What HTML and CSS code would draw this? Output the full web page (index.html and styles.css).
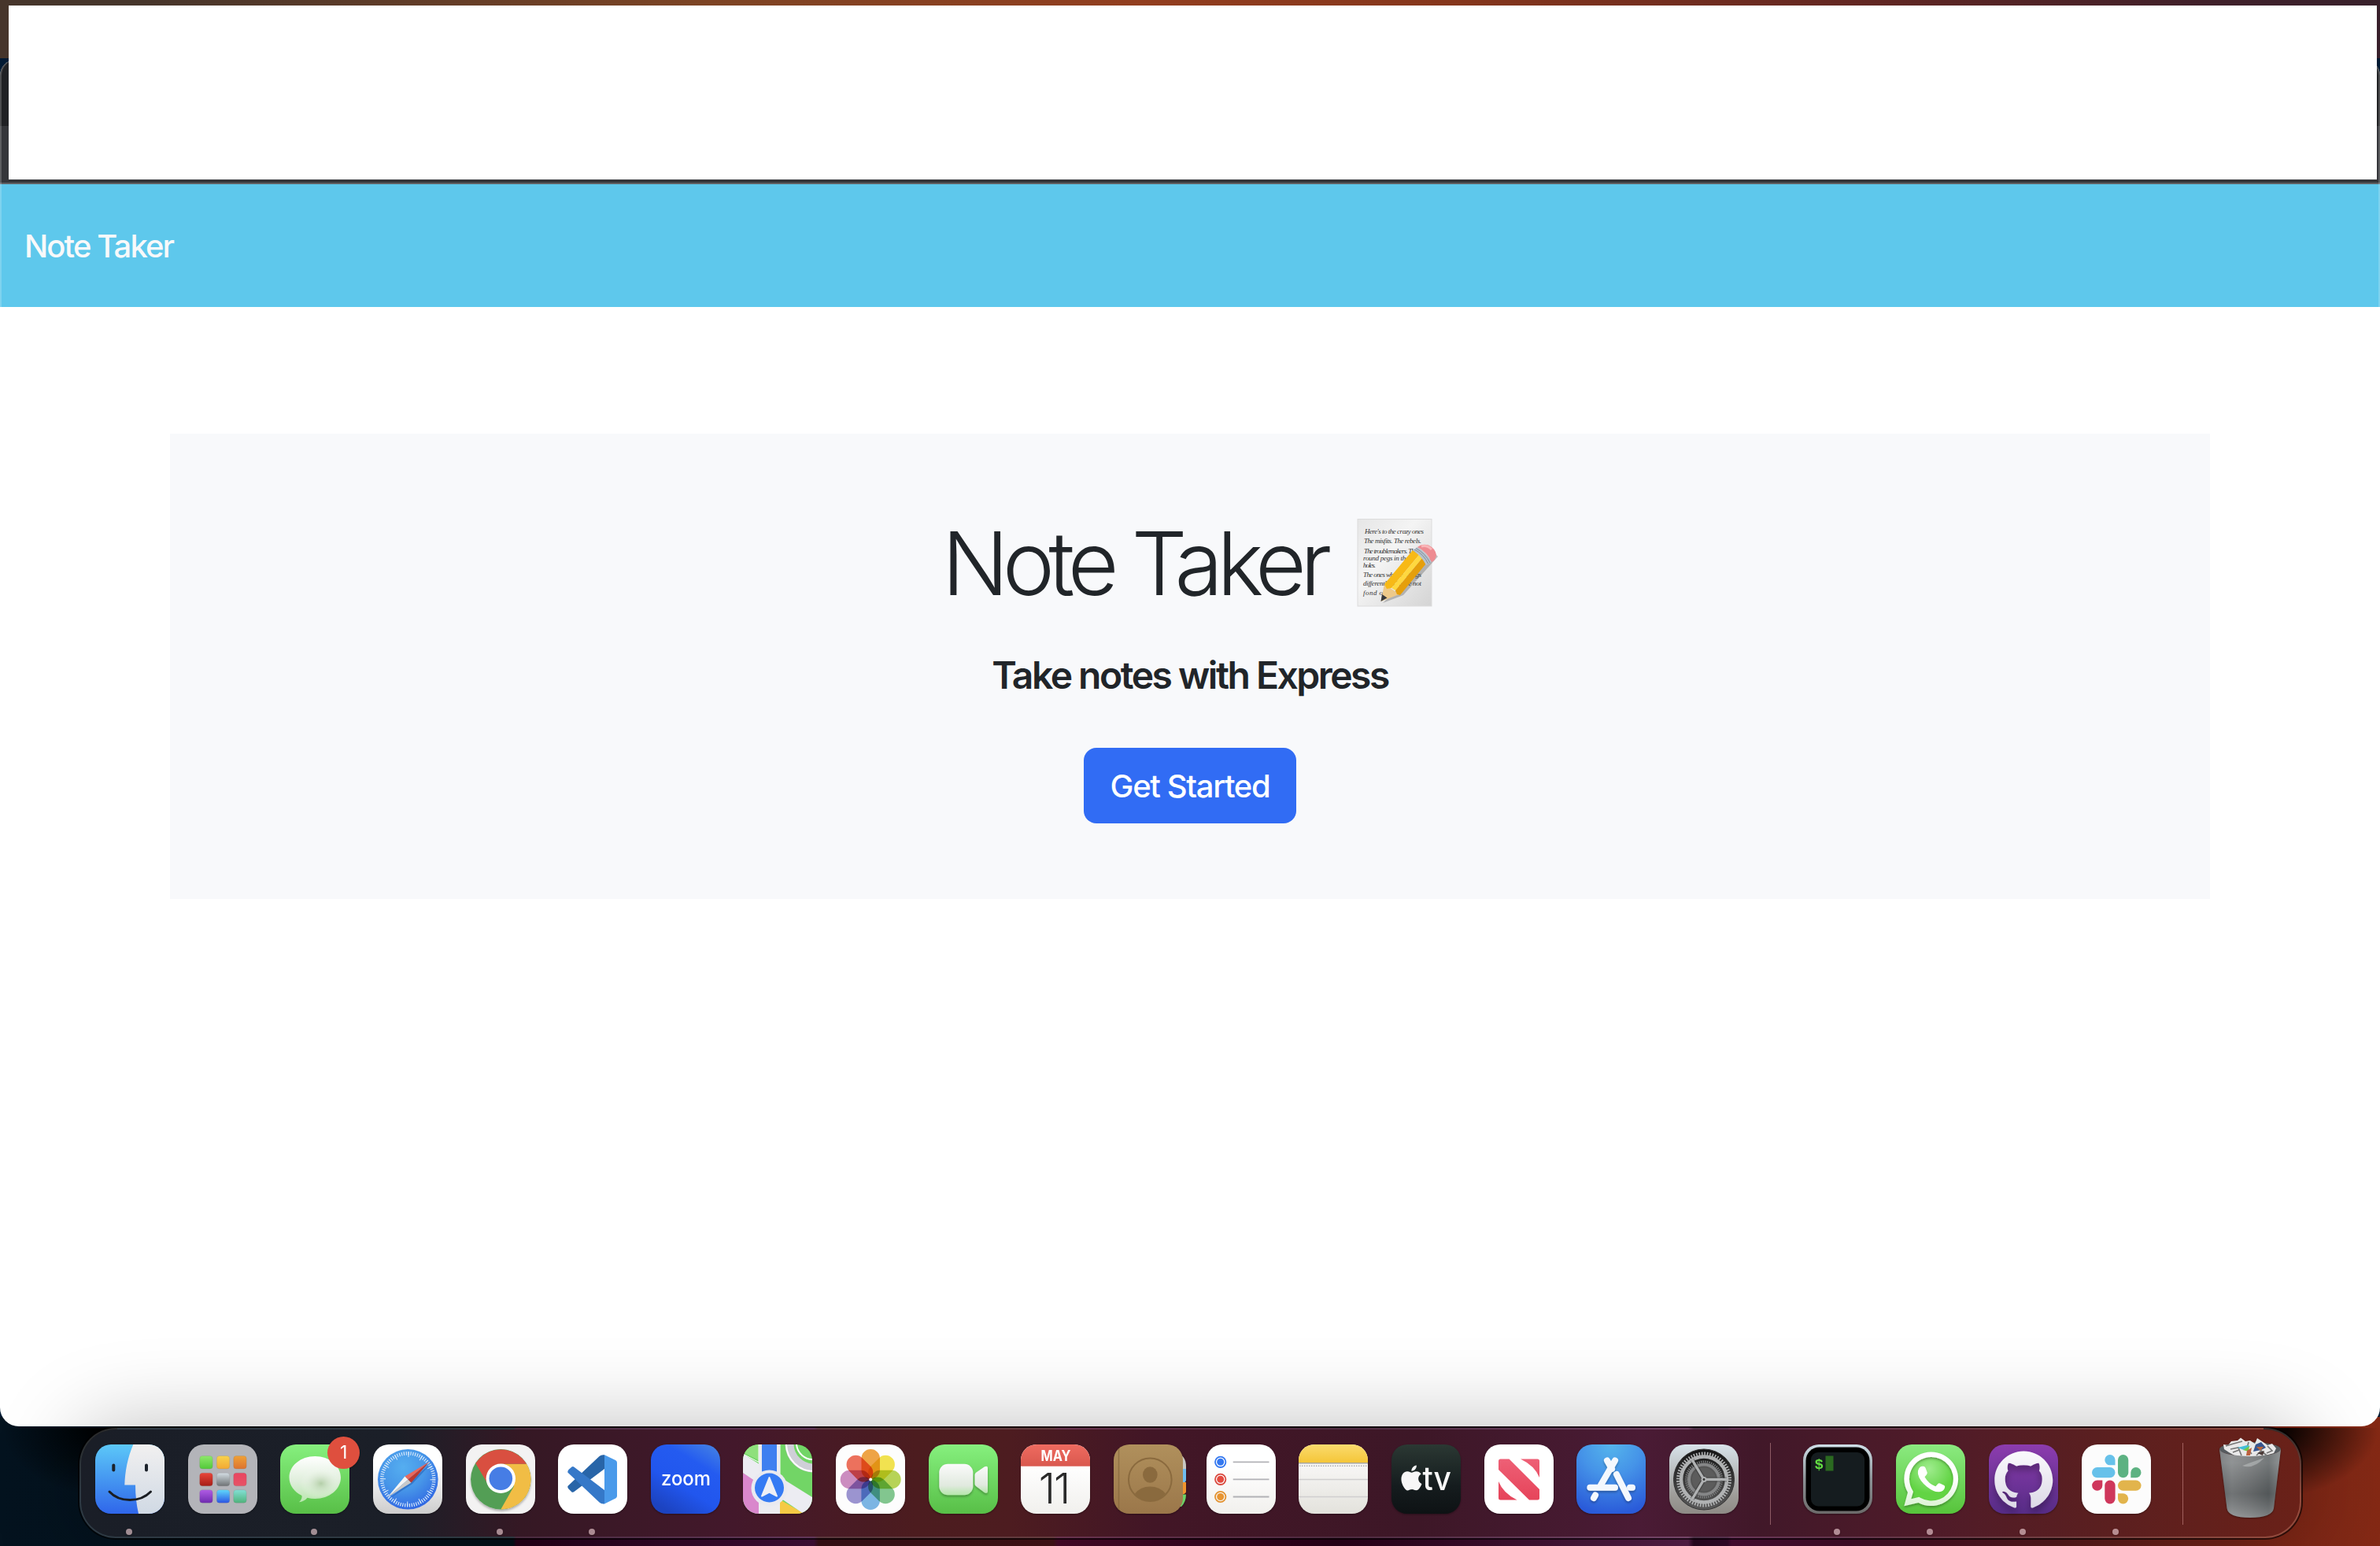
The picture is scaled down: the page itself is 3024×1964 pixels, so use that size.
FILE: index.html
```html
<!DOCTYPE html>
<html lang="en">
<head>
<meta charset="utf-8">
<title>Note Taker</title>
<link rel="stylesheet" href="styles.css">
</head>
<body>
<div class="menubar"></div>
<main class="window">
  <div class="tabs"></div>
  <div class="toolbar"></div>
  <nav class="navbar"><a class="brand">Note Taker</a></nav>
  <section class="hero">
    <h1 class="title"><span class="title-text">Note Taker</span>
      <svg class="memo" viewBox="0 0 112 112">
        <defs>
          <linearGradient id="paper" x2="1" y2="1"><stop offset="0" stop-color="#e6e6e6"/><stop offset=".4" stop-color="#f4f4f4"/><stop offset="1" stop-color="#d4d4d4"/></linearGradient>
        </defs>
        <rect x="10" y=".5" width="94" height="110.500" fill="url(#paper)" stroke="#dcdcdc"/>
        <g class="script">
          <text x="19" y="19" textLength="75">Here's to the crazy ones</text>
          <text x="18" y="31" textLength="73">The misfits. The rebels.</text>
          <text x="18" y="43.500" textLength="68">The troublemakers. The</text>
          <text x="17" y="52.500" textLength="58">round pegs in the</text>
          <text x="17" y="62" textLength="16">holes.</text>
          <text x="17" y="74" textLength="74">The ones who see things</text>
          <text x="17" y="84.500" textLength="74">differently. They're not</text>
          <text x="17" y="97" textLength="28">fond of</text>
        </g>
        <path d="M42 107 68 97 112 48 108 44Z" fill="#555" opacity=".35"/>
        <path d="M39.500 105 44 83 63 96Z" fill="#edc98a"/>
        <path d="M39.500 105 41 96 47.500 100.500Z" fill="#35383c"/>
        <path d="M44 83 80 40 88 46 53 88 47 89Z" fill="#f7b916"/>
        <path d="M53 88 88 46 92 50 58 91Z" fill="#ffd83f"/>
        <path d="M58 91 92 50 97 57 64 97 60 96Z" fill="#e59f0c"/>
        <path d="M80 40 86 36Q98 43 104 55L97 59Q91 47 80 40Z" fill="#b8c2cc"/>
        <path d="M82 39Q94 45 99.500 57M84 37.500Q96 44 102 56" fill="none" stroke="#7f8e9c" stroke-width="1"/>
        <path d="M86 36Q92 31 100 33.500 109 38 110 46 109 53 104 55 98 42 86 36Z" fill="#ee8c92"/>
        <path d="M91 35Q98 33 104 39" fill="none" stroke="#f9b6b8" stroke-width="3"/>
      </svg>
    </h1>
    <h4 class="subtitle">Take notes with Express</h4>
    <a class="btn"><span>Get Started</span></a>
  </section>
</main>
<div class="cover"></div>

<footer class="dock">
  <div class="apps">
    <div class="app running"><svg viewBox="0 0 88 88">
      <defs>
        <clipPath id="tile"><rect width="88" height="88" rx="20"/></clipPath>
        <linearGradient id="finder" x2="0" y2="1"><stop offset="0" stop-color="#5cc8f8"/><stop offset="1" stop-color="#2f66ea"/></linearGradient>
        <linearGradient id="finder2" x2="0" y2="1"><stop offset="0" stop-color="#f1f0f0"/><stop offset="1" stop-color="#d0d9e4"/></linearGradient>
      </defs>
      <g clip-path="url(#tile)"><rect width="88" height="88" fill="url(#finder)"/>
      <path d="M48.300 0C41 17 38 34 37.300 51.500H51C51 65 52.500 77 55 88H88V0Z" fill="url(#finder2)"/></g>
      <path d="M23.300 26.500V32.500M65 26.500V32.500" stroke="#1c222b" stroke-width="4" stroke-linecap="round"/>
      <path d="M18 60C31 74 57 74 70.500 60" fill="none" stroke="#1a1d22" stroke-width="3" stroke-linecap="round"/>
    </svg></div>

    <div class="app"><svg viewBox="0 0 88 88">
      <defs>
        <linearGradient id="t1" x2="0" y2="1"><stop stop-color="#8ee86c"/><stop offset="1" stop-color="#53c93a"/></linearGradient>
        <linearGradient id="t2" x2="0" y2="1"><stop stop-color="#f8d24c"/><stop offset="1" stop-color="#f2a934"/></linearGradient>
        <linearGradient id="t3" x2="0" y2="1"><stop stop-color="#efa137"/><stop offset="1" stop-color="#dd7330"/></linearGradient>
        <linearGradient id="t4" x2="0" y2="1"><stop stop-color="#e9463a"/><stop offset="1" stop-color="#a61d16"/></linearGradient>
        <linearGradient id="t5" x2="0" y2="1"><stop stop-color="#d3dde3"/><stop offset="1" stop-color="#6f7375"/></linearGradient>
        <linearGradient id="t6" x2="0" y2="1"><stop stop-color="#ea4560"/><stop offset="1" stop-color="#e65367"/></linearGradient>
        <linearGradient id="t7" x2="0" y2="1"><stop stop-color="#b05ce4"/><stop offset="1" stop-color="#6f2bb0"/></linearGradient>
        <linearGradient id="t8" x2="0" y2="1"><stop stop-color="#5fd8fb"/><stop offset="1" stop-color="#2b55e4"/></linearGradient>
        <linearGradient id="t9" x2="0" y2="1"><stop stop-color="#83dfd5"/><stop offset="1" stop-color="#4fb37c"/></linearGradient>
      </defs>
      <rect width="88" height="88" rx="20" fill="#b3b4b9"/>
      <g stroke="#777" stroke-opacity=".35" stroke-width=".6">
      <rect x="14.700" y="14.500" width="16.500" height="16.500" rx="3.500" fill="url(#t1)"/><rect x="36.300" y="14.500" width="16.500" height="16.500" rx="3.500" fill="url(#t2)"/><rect x="57.700" y="14.500" width="16.500" height="16.500" rx="3.500" fill="url(#t3)"/>
      <rect x="14.700" y="36.200" width="16.500" height="16.500" rx="3.500" fill="url(#t4)"/><rect x="36.300" y="36.200" width="16.500" height="16.500" rx="3.500" fill="url(#t5)"/><rect x="57.700" y="36.200" width="16.500" height="16.500" rx="3.500" fill="url(#t6)"/>
      <rect x="14.700" y="57.700" width="16.500" height="16.500" rx="3.500" fill="url(#t7)"/><rect x="36.300" y="57.700" width="16.500" height="16.500" rx="3.500" fill="url(#t8)"/><rect x="57.700" y="57.700" width="16.500" height="16.500" rx="3.500" fill="url(#t9)"/>
      </g>
    </svg></div>

    <div class="app running"><svg viewBox="0 0 88 88">
      <defs>
        <linearGradient id="green" x2="0" y2="1"><stop stop-color="#86f07e"/><stop offset="1" stop-color="#58bf47"/></linearGradient>
        <linearGradient id="bubble" x2="0" y2="1"><stop stop-color="#fff"/><stop offset=".55" stop-color="#dfeedb"/><stop offset="1" stop-color="#b9e6ae"/></linearGradient>
        <radialGradient id="shade" cx=".6" cy=".62" r=".45"><stop stop-color="#a9c79c" stop-opacity=".8"/><stop offset="1" stop-color="#fff" stop-opacity="0"/></radialGradient>
      </defs>
      <rect width="88" height="88" rx="20" fill="url(#green)"/>
      <path d="M44.300 15C62.500 15 77 27 77 42S62.500 69 44.300 69Q39 69 34.500 67.800C32 71 28 73 24 73.300 27 70.500 28 67.500 27.500 65 17.500 60 11.500 51.500 11.500 42 11.500 27 26 15 44.300 15Z" fill="url(#bubble)"/>
      <ellipse cx="46" cy="44" rx="29" ry="23" fill="url(#shade)"/>
    </svg><span class="badge">1</span></div>

    <div class="app"><svg viewBox="0 0 88 88">
      <defs>
        <linearGradient id="white" x2="0" y2="1"><stop offset=".3" stop-color="#fff"/><stop offset="1" stop-color="#cdcdcd"/></linearGradient>
        <radialGradient id="sky" cx=".42" cy=".3" r=".75"><stop stop-color="#55aef0"/><stop offset=".5" stop-color="#4796e8"/><stop offset="1" stop-color="#2e63e2"/></radialGradient>
      </defs>
      <rect width="88" height="88" rx="20" fill="url(#white)"/>
      <circle cx="44.300" cy="44.300" r="38.300" fill="url(#sky)"/>
      <circle cx="44.300" cy="44.300" r="33" fill="none" stroke="#d6e8fa" stroke-width="4.500" stroke-dasharray="1.200 1.680"/>
      <circle cx="44.300" cy="44.300" r="31.500" fill="none" stroke="#d6e8fa" stroke-width="6.500" stroke-dasharray="1.100 15.393"/>
      <path d="M20 69.500 50 50 74 24Z" fill="#1b4fa8" opacity=".45"/>
      <path d="M18 67.500 40.500 40.500 44.500 44.500Z" fill="#f5f5f5"/><path d="M18 67.500 44.500 44.500 48.500 48.500Z" fill="#c9c9c9"/>
      <path d="M71.500 22 40.500 40.500 44.500 44.500Z" fill="#e8695e"/><path d="M71.500 22 44.500 44.500 48.500 48.500Z" fill="#b93a31"/>
    </svg></div>

    <div class="app running"><svg viewBox="0 0 88 88">
      <defs><filter id="soft" x="-20%" y="-20%" width="140%" height="150%"><feDropShadow dx="0" dy="2" stdDeviation="1.500" flood-opacity=".3"/></filter></defs>
      <rect width="88" height="88" rx="20" fill="#f3f2f2"/>
      <g filter="url(#soft)">
      <circle cx="44.300" cy="44.300" r="38.200" fill="#529e54"/>
      <path d="M44.300 24.700H77.100A38.200 38.200 0 0 1 44.300 82.500L61 53Z" fill="#f1bd45"/>
      <path d="M12.300 24A38.200 38.200 0 0 1 77 24.700H44.300L27 49Z" fill="#d95040"/></g>
      <circle cx="44.300" cy="43.300" r="18.700" fill="#fff"/><circle cx="44.300" cy="43.300" r="14.800" fill="#467de5"/>
    </svg></div>

    <div class="app running"><svg viewBox="0 0 88 88">
      <rect width="88" height="88" rx="20" fill="#fff"/>
      <path d="M12.300 53Q12 55 13.500 56.500L17.500 60.500Q19 61.300 20.500 60L59 31V13.300Q55 12.700 52.500 15Z" fill="#2865a8"/>
      <path d="M12.300 35.500Q12 33.500 13.500 32L17.500 28.500Q19 27.500 20.500 28.700L59 58V75.500Q55 76 52.500 73.500Z" fill="#3578c8"/>
      <path d="M59 13.300 73 20Q75 21 75 23V65.500Q75 67.500 73 68.500L59 75.500Z" fill="#4a9aea"/>
    </svg></div>

    <div class="app"><svg viewBox="0 0 88 88">
      <defs><linearGradient id="zm" x1=".9" x2=".3" y2="1"><stop stop-color="#4380e4"/><stop offset=".3" stop-color="#245bf0"/><stop offset=".65" stop-color="#2156ee"/><stop offset="1" stop-color="#1c43c0"/></linearGradient></defs>
      <rect width="88" height="88" rx="20" fill="url(#zm)"/>
      <text class="zoom-word" x="13" y="51.500" textLength="63" lengthAdjust="spacingAndGlyphs">zoom</text>
    </svg></div>

    <div class="app"><svg viewBox="0 0 88 88">
      <g clip-path="url(#tile)"><rect width="88" height="88" fill="#72d566"/>
      <path d="M0 0H20V20L0 10Z" fill="#8fe07c"/>
      <path d="M0 36 20 48V88H0Z" fill="#d987cc"/>
      <path d="M47 70 78 88H47Z" fill="#f5ca45"/>
      <path d="M0 12 88 67V88H77L0 36Z" fill="#ececf2"/><path d="M0 12 20 22.500V0H47V41" fill="none" stroke="#fff" stroke-width="1"/>
      <path d="M20 0H47V88H20Z" fill="#ececf0"/>
      <path d="M24 0H43V50H24Z" fill="#3f80f0"/>
      <path d="M59 0A31 31 0 0 0 90 30" fill="none" stroke="#cfcfd8" stroke-width="11"/><path d="M55 0A35 35 0 0 0 90 34M68 0A21 21 0 0 0 90 19" fill="none" stroke="#fff" stroke-width="2"/></g>
      <circle cx="33.500" cy="55.500" r="23" fill="#e9eaf0"/><circle cx="33.500" cy="55" r="18.500" fill="#357bf4"/>
      <path d="M33.500 42 24 65.500 33.500 60.500 43 65.500Z" fill="#eef0f6" stroke="#eef0f6" stroke-width="2" stroke-linejoin="round"/>
    </svg></div>

    <div class="app"><svg viewBox="0 0 88 88">
      <rect width="88" height="88" rx="20" fill="#fdfdfd"/>
      <g class="petals">
        <rect x="32.500" y="6" width="23.500" height="38" rx="11.700" fill="#f0a03c"/>
        <rect x="32.500" y="6" width="23.500" height="38" rx="11.700" fill="#f3e346" transform="rotate(45 44.200 44.500)"/>
        <rect x="32.500" y="6" width="23.500" height="38" rx="11.700" fill="#b5d34f" transform="rotate(90 44.200 44.500)"/>
        <rect x="32.500" y="6" width="23.500" height="38" rx="11.700" fill="#7cc58a" transform="rotate(135 44.200 44.500)"/>
        <rect x="32.500" y="6" width="23.500" height="38" rx="11.700" fill="#76b3e4" transform="rotate(180 44.200 44.500)"/>
        <rect x="32.500" y="6" width="23.500" height="38" rx="11.700" fill="#978fd0" transform="rotate(225 44.200 44.500)"/>
        <rect x="32.500" y="6" width="23.500" height="38" rx="11.700" fill="#cb88bf" transform="rotate(270 44.200 44.500)"/>
        <rect x="32.500" y="6" width="23.500" height="38" rx="11.700" fill="#ee6a55" transform="rotate(315 44.200 44.500)"/>
      </g>
      <circle cx="44.200" cy="44.500" r="2" fill="#fff"/>
    </svg></div>

    <div class="app"><svg viewBox="0 0 88 88">
      <defs><linearGradient id="cam" x2="0" y2="1"><stop stop-color="#fbfbfb"/><stop offset=".7" stop-color="#e0e9de"/><stop offset="1" stop-color="#b5e6ab"/></linearGradient></defs>
      <rect width="88" height="88" rx="20" fill="url(#green)"/>
      <g filter="url(#soft)"><rect x="13.300" y="24.700" width="43" height="39.500" rx="11" fill="url(#cam)"/>
      <path d="M58.500 39Q58.500 37 60 35.800L71 28.200Q75 26.500 75 30V59.500Q75 63 71 61.200L60 53Q58.500 51.700 58.500 50Z" fill="url(#cam)"/></g>
    </svg></div>

    <div class="app"><svg viewBox="0 0 88 88">
      <defs>
        <linearGradient id="cal" x2="0" y2="1"><stop stop-color="#ef6b60"/><stop offset="1" stop-color="#d9584e"/></linearGradient>
        <linearGradient id="sheet" x2="0" y2="1"><stop offset=".3" stop-color="#fff"/><stop offset="1" stop-color="#f1f0ed"/></linearGradient>
      </defs>
      <g clip-path="url(#tile)"><rect width="88" height="88" fill="url(#sheet)"/><rect width="88" height="27.700" fill="url(#cal)"/></g>
      <text class="month" x="44.500" y="21.300" textLength="38" lengthAdjust="spacingAndGlyphs">MAY</text>
      <text class="day" x="42" y="75">11</text>
    </svg></div>

    <div class="app"><svg viewBox="0 0 88 88">
      <defs><linearGradient id="book" x2="0" y2="1"><stop stop-color="#b0905c"/><stop offset="1" stop-color="#9b774a"/></linearGradient></defs>
      <path d="M80 11Q92 14 92 28V31H80Z" fill="#c9c8c2"/><path d="M80 31H92V45Q92 48 88 49H80Z" fill="#6fbdf0"/><path d="M80 48H92V60Q92 62 88 63.500H80Z" fill="#f0952f"/><path d="M80 63.500H92Q92 73 86 79L80 79Z" fill="#6bd267"/>
      <rect width="88" height="88" rx="20" fill="url(#book)"/>
      <path d="M6.500 5V83" stroke="#7f6239" stroke-width="1.500" opacity=".6"/>
      <ellipse cx="46.300" cy="38.500" rx="9.300" ry="10.300" fill="#8a6a3e"/><path d="M27 62.500Q34 53.500 46.300 53.500T66 62.500Q58 72 46.300 72T27 62.500Z" fill="#8a6a3e"/>
      <circle cx="46.300" cy="44.700" r="27.300" fill="none" stroke="#8a6a3e" stroke-width="2"/>
    </svg></div>

    <div class="app"><svg viewBox="0 0 88 88">
      <rect width="88" height="88" rx="20" fill="url(#sheet)"/>
      <g fill="none" stroke-width="1.800"><circle cx="17.700" cy="22.300" r="6.700" stroke="#3478f0"/><circle cx="17.700" cy="44.300" r="6.700" stroke="#d94a3f"/><circle cx="17.700" cy="66.500" r="6.700" stroke="#e39230"/></g>
      <circle cx="17.700" cy="22.300" r="4.500" fill="#3478f0"/><circle cx="17.700" cy="44.300" r="4.500" fill="#e54b40"/><circle cx="17.700" cy="66.500" r="4.500" fill="#e89532"/>
      <path d="M33.700 22.300H79.500M33.700 44.300H79.500M33.700 66.500H79.500" stroke="#b2b2b6" stroke-width="1.800"/>
    </svg></div>

    <div class="app"><svg viewBox="0 0 88 88">
      <defs><linearGradient id="pad" x2="0" y2="1"><stop offset=".3" stop-color="#f7f6f5"/><stop offset="1" stop-color="#e3e2dc"/></linearGradient>
      <linearGradient id="gold" x2="0" y2="1"><stop stop-color="#fadb6e"/><stop offset="1" stop-color="#f5c638"/></linearGradient></defs>
      <g clip-path="url(#tile)"><rect width="88" height="88" fill="url(#pad)"/><rect width="88" height="23" fill="url(#gold)"/><rect y="23" width="88" height="1.500" fill="#a9a69c"/>
      <path d="M1 27.200H88" stroke="#a8a8a8" stroke-width="1.400" stroke-dasharray="1.400 1.600"/><path d="M0 44.500H88M0 66.500H88" stroke="#d0cfcf" stroke-width="1.700"/></g>
    </svg></div>

    <div class="app"><svg viewBox="0 0 88 88">
      <defs><linearGradient id="tv" x2="0" y2="1"><stop stop-color="#2b3833"/><stop offset=".6" stop-color="#151c1e"/><stop offset="1" stop-color="#0e1214"/></linearGradient></defs>
      <rect width="88" height="88" rx="20" fill="url(#tv)"/>
      <path transform="translate(9.500 26.500) scale(1.330)" fill="#f7f7f7" d="M12.152 6.896c-.948 0-2.415-1.078-3.960-1.040-2.040.027-3.910 1.183-4.961 3.014-2.117 3.675-.546 9.103 1.519 12.090 1.013 1.454 2.208 3.090 3.792 3.039 1.520-.065 2.090-.987 3.935-.987 1.831 0 2.350.987 3.960.948 1.637-.026 2.676-1.480 3.676-2.948 1.156-1.688 1.636-3.325 1.662-3.415-.039-.013-3.182-1.221-3.220-4.857-.026-3.040 2.480-4.494 2.597-4.559-1.429-2.090-3.623-2.324-4.390-2.376-2-.156-3.675 1.090-4.610 1.090zM15.530 3.830c.843-1.012 1.400-2.427 1.245-3.830-1.207.052-2.662.805-3.532 1.818-.780.896-1.454 2.338-1.273 3.714 1.338.104 2.715-.688 3.559-1.701"/>
      <text class="tv-word" x="39.500" y="58" textLength="36.500" lengthAdjust="spacingAndGlyphs">tv</text>
    </svg></div>

    <div class="app"><svg viewBox="0 0 88 88">
      <defs><linearGradient id="news" gradientUnits="userSpaceOnUse" x1="0" y1="18" x2="0" y2="70"><stop stop-color="#ee6076"/><stop offset="1" stop-color="#e6445a"/></linearGradient></defs>
      <rect width="88" height="88" rx="20" fill="#fff"/>
      <g fill="url(#news)"><path d="M18 21Q18 18.500 20.500 18.500H31.500L70 57V68Q70 70.500 67.500 70.500H57L18 32Z"/><path d="M46 18.500H67.500Q70 18.500 70 21V42Q64 27 46 18.500Z"/><path d="M18 47Q24 62 41.500 70.500H20.500Q18 70.500 18 68Z"/></g>
    </svg></div>

    <div class="app"><svg viewBox="0 0 88 88">
      <defs><radialGradient id="store" cx=".5" cy="0" r="1"><stop stop-color="#55b5ec"/><stop offset=".45" stop-color="#4593e8"/><stop offset="1" stop-color="#2a5bd9"/></radialGradient></defs>
      <rect width="88" height="88" rx="20" fill="url(#store)"/>
      <g fill="none" stroke="#f4f8fd" stroke-width="8" stroke-linecap="round" filter="url(#soft)">
        <path d="M17.300 54.800H49M68 54.800H71"/><path d="M24 64.500 22 68"/>
        <path d="M39 20.500 45 31M51 38 66 68"/><path d="M49 20.500 31 51.500"/>
      </g>
    </svg></div>

    <div class="app"><svg viewBox="0 0 88 88">
      <defs><linearGradient id="steel" x2="0" y2="1"><stop stop-color="#d8e3ea"/><stop offset=".75" stop-color="#9d9b97"/><stop offset="1" stop-color="#8e8b86"/></linearGradient>
      <linearGradient id="dark" x2="0" y2="1"><stop stop-color="#141414"/><stop offset="1" stop-color="#5a5a5a"/></linearGradient></defs>
      <rect width="88" height="88" rx="20" fill="url(#steel)"/>
      <circle cx="44" cy="44.500" r="38.500" fill="url(#dark)"/><circle cx="44" cy="44.500" r="38.500" fill="none" stroke="#333" stroke-width="1"/>
      <circle cx="44" cy="44.500" r="32.700" fill="none" stroke="#b0b2b3" stroke-width="4.500" stroke-dasharray="1.700 1.725"/>
      <circle cx="44" cy="44.500" r="29" fill="none" stroke="#b0b2b3" stroke-width="4.500"/>
      <circle cx="44" cy="44.500" r="22.500" fill="none" stroke="#7d7e7f" stroke-width="3" stroke-dasharray="1.300 1.300"/>
      <circle cx="44" cy="44.500" r="19" fill="#555" stroke="#858687" stroke-width="4"/><circle cx="44" cy="44.500" r="15" fill="#5c5c5c"/>
      <path d="M44 44.500H73M44 44.500 29 19.500M44 44.500 29 69.500" stroke="#222" stroke-width="6" opacity=".35"/>
      <path d="M44 44.500H73M44 44.500 29 19.500M44 44.500 29 69.500" stroke="#b0b2b3" stroke-width="3.400"/>
      <circle cx="44" cy="44.500" r="3.500" fill="#b0b2b3"/><circle cx="44" cy="44.500" r="1.400" fill="#333"/>
    </svg></div>
  </div>
  <div class="sep"></div>
  <div class="apps wide">
    <div class="app running"><svg viewBox="0 0 88 88">
      <defs><linearGradient id="rim" x2="0" y2="1"><stop stop-color="#cfdfe8"/><stop offset=".5" stop-color="#8b9296"/><stop offset="1" stop-color="#6c6a6a"/></linearGradient></defs>
      <rect width="88" height="88" rx="20" fill="url(#rim)"/><rect x="3.500" y="3.500" width="81" height="81" rx="17" fill="#000"/><rect x="10" y="10" width="68" height="68.500" rx="9" fill="#151c1f"/>
      <text class="prompt" x="14.500" y="31">$</text><rect x="28.500" y="14.500" width="10" height="19" fill="#2b6a20"/>
    </svg></div>

    <div class="app running"><svg viewBox="0 0 88 88">
      <defs><radialGradient id="wa" cx=".45" cy=".3" r=".5"><stop stop-color="#9fec8e"/><stop offset="1" stop-color="#62d444"/></radialGradient>
      <linearGradient id="wab" x2="0" y2="1"><stop stop-color="#8bea80"/><stop offset="1" stop-color="#57c43b"/></linearGradient>
      <linearGradient id="waw" x2="0" y2="1"><stop offset=".5" stop-color="#fff"/><stop offset="1" stop-color="#dcf3d6"/></linearGradient></defs>
      <rect width="88" height="88" rx="20" fill="url(#wab)"/><circle cx="45" cy="43.500" r="31" fill="url(#wa)"/>
      <path filter="url(#soft)" d="M44.800 9.500A34.300 34.300 0 1 1 28.500 74L10.300 78.300 15 61A34.300 34.300 0 0 1 44.800 9.500ZM44.800 16A27.800 27.800 0 0 0 21.200 58.500L22 60 19.300 69.300 29.300 66.800 31 67.800A27.800 27.800 0 1 0 44.800 16Z" fill="url(#waw)" fill-rule="evenodd"/>
      <path d="M34 27.700Q36.500 27.300 37.500 29.700L39.700 35.500Q40 37 38.800 38.500L36.500 41.200Q41.500 50 50.300 53.200L53.500 49.700Q54.500 48.800 56 49.500L61.300 52Q62.700 52.800 62 55 60.500 60 55 60.300 48.500 61 39 53.500 29.500 45.500 28 37.500 27.300 32 30.700 28.700 32 27.500 34 27.700Z" fill="#fff"/>
    </svg></div>

    <div class="app running"><svg viewBox="0 0 88 88">
      <defs><linearGradient id="gh" x2="0" y2="1"><stop stop-color="#8c3cae"/><stop offset="1" stop-color="#572c87"/></linearGradient>
      <linearGradient id="ghw" x2="0" y2="1"><stop stop-color="#fbfafd"/><stop offset="1" stop-color="#dcd9e6"/></linearGradient></defs>
      <rect width="88" height="88" rx="20" fill="url(#gh)"/>
      <path filter="url(#soft)" transform="translate(7.300 7.500) scale(3.080)" fill="url(#ghw)" d="M12 .297c-6.630 0-12 5.373-12 12 0 5.303 3.438 9.800 8.205 11.385.600.113.820-.258.820-.577 0-.285-.010-1.040-.015-2.040-3.338.724-4.042-1.610-4.042-1.610C4.422 18.070 3.633 17.700 3.633 17.700c-1.087-.744.084-.729.084-.729 1.205.084 1.838 1.236 1.838 1.236 1.070 1.835 2.809 1.305 3.495.998.108-.776.417-1.305.760-1.605-2.665-.300-5.466-1.332-5.466-5.930 0-1.310.465-2.380 1.235-3.220-.135-.303-.540-1.523.105-3.176 0 0 1.005-.322 3.300 1.230.960-.267 1.980-.399 3-.405 1.020.006 2.040.138 3 .405 2.280-1.552 3.285-1.230 3.285-1.230.645 1.653.240 2.873.120 3.176.765.840 1.230 1.910 1.230 3.220 0 4.610-2.805 5.625-5.475 5.920.420.360.810 1.096.810 2.220 0 1.606-.015 2.896-.015 3.286 0 .315.210.690.825.570C20.565 22.092 24 17.592 24 12.297c0-6.627-5.373-12-12-12"/>
    </svg></div>

    <div class="app running"><svg viewBox="0 0 88 88">
      <rect width="88" height="88" rx="20" fill="#fcfcfc"/>
      <g fill="#67c1ea"><rect x="13" y="29" width="29.500" height="13.300" rx="6.650"/><path d="M42.500 26.300H36A6.600 6.600 0 1 1 42.500 19.700Z"/></g>
      <g fill="#5db282"><rect x="46" y="13" width="13.300" height="29.300" rx="6.650"/><path d="M62.300 42.300V35.700A6.600 6.600 0 1 1 68.900 42.300Z"/></g>
      <g fill="#cf375c"><rect x="29.300" y="45.500" width="13.300" height="30" rx="6.650"/><path d="M26.300 45.500V52.100A6.600 6.600 0 1 1 19.700 45.500Z"/></g>
      <g fill="#e2b44c"><rect x="46" y="45.500" width="29.500" height="13.300" rx="6.650"/><path d="M46 62.200H52.600A6.600 6.600 0 1 1 46 68.800Z"/></g>
    </svg></div>
  </div>
  <div class="sep"></div>
  <div class="app"><svg viewBox="0 0 88 88">
    <defs><linearGradient id="bin"><stop stop-color="#6d7275"/><stop offset=".2" stop-color="#85898b"/><stop offset=".5" stop-color="#74787a"/><stop offset=".8" stop-color="#5d6365"/><stop offset="1" stop-color="#84898b"/></linearGradient>
    <linearGradient id="binshade" x2="0" y2="1"><stop offset=".2" stop-color="#aaa" stop-opacity=".3"/><stop offset=".65" stop-color="#333" stop-opacity=".25"/><stop offset="1" stop-color="#bbb" stop-opacity=".35"/></linearGradient></defs>
    <ellipse cx="44" cy="6" rx="39" ry="9" fill="#565b5f"/>
    <path d="M11 6 10 0 16 1 20-4 28-5 32-8.500 38-4 44-5 50-1 53-8 62-2 66 1 72-1 77 5 74 11 60 15 26 15 17 10Z" fill="#e9e9e9"/>
    <path d="M13 2 23-1 34-4M19 6 29 4 33 14M42-3 40 5 46 12M66 2 72 8 65 11M22 10 30 7M52 14 58 8 65 14" fill="none" stroke="#777" stroke-width="1.700"/>
    <path d="M28 4 40 1 44 2 36 7Z" fill="#43bdd8"/><path d="M35 7 43 2 42 9Z" fill="#71c94a"/><path d="M40 8 46 4 44 14 39 14Z" fill="#bb613f"/>
    <path d="M51 0 58-3 64 4 58 7 48 9Z" fill="#38558e"/><path d="M52 3 61 3 57 8Z" fill="#b9673c"/><path d="M53 11 62 8 60 14Z" fill="#4a3a37"/>
    <path d="M5 6Q7 14 44 15 81 14 83 6L74 81Q72 93 44 93T14.500 81Z" fill="url(#bin)"/>
    <path d="M5 6Q7 14 44 15 81 14 83 6L74 81Q72 93 44 93T14.500 81Z" fill="url(#binshade)"/>
    <path d="M34 27Q48 32 62 17 50 21 34 27Z" fill="#c4c7c8" opacity=".5"/>
  </svg></div>
</footer>
</body>
</html>
```

FILE: styles.css
```css
* { box-sizing: border-box; }

html, body { height: 100%; }

body {
  margin: 0;
  width: 3024px;
  height: 1964px;
  overflow: hidden;
  display: flex;
  flex-direction: column;
  align-items: center;
  position: relative;
  font-family: Inter, "Liberation Sans", sans-serif;
  background:
    linear-gradient(90deg, #04131f 0, #03101a 652px, #250018 656px, #420f38 1034px, #3a1016 1040px, #451417 1338px, #4a0a2a 1344px, #2a0019 1700px, #58204a 2145px, #2a0822 2152px, #34082a 2195px, #4a0d35 2200px, #430d28 2350px, #561a1c 2620px, #7c2616 2900px, #842915 3024px) 0 1800px / 3024px 164px no-repeat,
    #021a33;
}

.menubar {
  width: 100%;
  height: 74px;
  flex: none;
  background: linear-gradient(90deg, #46352b 0, #46352b 180px, #7d4424 900px, #923e1f 1450px, #85361c 1850px, #632722 2350px, #40202a 2800px, #38202b 3024px);
}

.window {
  width: 100%;
  height: 1736px;
  margin-top: 2px;
  flex: none;
  display: flex;
  flex-direction: column;
  align-items: center;
  position: relative;
  overflow: hidden;
  border-radius: 20px 20px 24px 24px;
  background: #fff;
}

.window::after {
  content: "";
  position: absolute;
  inset: 0;
  border-radius: inherit;
  box-shadow: inset 2px 0 rgba(255, 255, 255, .2), inset -2px 0 rgba(255, 255, 255, .2);
}

.tabs { width: 100%; height: 84px; background: #202124; }
.toolbar { width: 100%; height: 74px; background: #35363a; border-bottom: 2px solid #5f6064; }

.cover {
  position: absolute;
  left: 11px;
  top: 7px;
  width: 3009px;
  height: 221px;
  background: #fff;
}

.navbar {
  width: 100%;
  height: 156px;
  padding: 2px 31px 0;
  display: flex;
  align-items: center;
  background: #5ec8ec;
}

.brand { color: #f8f9fa; font-size: 40px; font-weight: 450; line-height: 60px; letter-spacing: -1.9px; }

.hero {
  width: 2592px;
  height: 591px;
  margin-top: 161px;
  padding-top: 97px;
  display: flex;
  flex-direction: column;
  align-items: center;
  background: #f8f9fb;
  color: #212529;
}

.title {
  margin: 0;
  display: flex;
  align-items: center;
  font-weight: 300;
  font-size: 112px;
  line-height: 134px;
}

.title-text { letter-spacing: -7.900px; }
.memo { width: 112px; height: 112px; margin-left: 31px; }
.script { font: italic 9px "Liberation Serif", serif; fill: #333; }

.subtitle {
  margin: 47px 0 0;
  font-weight: 600;
  font-size: 48px;
  line-height: 58px;
  letter-spacing: -2.500px;
}

.btn {
  margin-top: 63px;
  width: 270px;
  height: 96px;
  display: flex;
  align-items: center;
  justify-content: center;
  border-radius: 16px;
  background: #316cf4;
  color: #fff;
  font-size: 40px;
  font-weight: 450;
  letter-spacing: -1.350px;
  white-space: nowrap;
}

.dock {
  position: relative;
  flex: none;
  width: 2823px;
  height: 140px;
  margin-top: 2px;
  padding: 18.500px;
  display: flex;
  gap: 40.500px;
  border: 2px solid rgba(255, 255, 255, .17);
  border-radius: 46px;
  background: linear-gradient(90deg, #1a1e27 0, #1b1f28 400px, #351824 560px, #43182b 830px, #4c1c1f 1060px, #4d1c20 1180px, #421626 1360px, #3d1727 1700px, #4a1b35 1980px, #411829 2130px, #4f1b29 2350px, #5a1f20 2560px, #6a2118 2823px);
  background-clip: padding-box;
  box-shadow: 0 0 0 2px rgba(0, 0, 0, .6), 0 0 110px rgba(0, 0, 0, .27);
}

/* the window's shadow on the wallpaper at both ends of the dock */
.dock::before,
.dock::after {
  content: "";
  position: absolute;
  z-index: -1;
  top: -2px;
  width: 146px;
  height: 90px;
}
.dock::before {
  right: calc(100% - 46px);
  background: radial-gradient(146px 90px at 100% 0, rgba(0, 0, 0, .9) 20%, transparent);
}
.dock::after {
  left: calc(100% - 46px);
  background: radial-gradient(146px 90px at 0 0, rgba(0, 0, 0, .9) 20%, transparent);
}

.apps { display: flex; gap: 29.650px; }
.apps.wide { gap: 30px; }

.app { position: relative; width: 88px; height: 88px; filter: drop-shadow(0 1px 1px rgba(0, 0, 0, .35)); }
.app svg { display: block; width: 88px; height: 88px; overflow: visible; }

.running::after {
  content: "";
  position: absolute;
  left: 39px;
  top: 107px;
  width: 8px;
  height: 8px;
  border-radius: 50%;
  background: rgba(255, 220, 225, .6);
}

.badge {
  position: absolute;
  left: 60px;
  top: -10px;
  width: 41px;
  height: 41px;
  border-radius: 50%;
  background: #df4f3e;
  color: #fff;
  font-size: 23px;
  line-height: 41px;
  text-align: center;
}

.sep { width: 2px; height: 104px; margin-top: -2px; background: rgba(255, 190, 190, .4); }

.petals rect { mix-blend-mode: multiply; opacity: .95; }
.zoom-word { font: 500 25px Inter, sans-serif; fill: #fff; }
.month { font: 700 19px Inter, sans-serif; fill: #fff; text-anchor: middle; }
.day { font: 300 54px Inter, sans-serif; fill: #2a2a2a; text-anchor: middle; letter-spacing: -2px; }
.tv-word { font: 500 41px Inter, sans-serif; fill: #f7f7f7; }
.prompt { font: 700 19px "Liberation Mono", monospace; fill: #62dd42; }
```
